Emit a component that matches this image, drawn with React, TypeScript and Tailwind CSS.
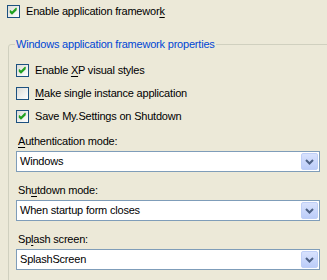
import type { ReactNode } from 'react'

function CheckBox({ checked }: { checked: boolean }) {
  return (
    <span className="w-[13px] h-[13px] shrink-0 border border-[#1C5180] bg-gradient-to-br from-[#DCDCD7] to-white flex items-center justify-center">
      {checked && (
        <svg width="11" height="11" viewBox="0 0 11 11" className="block">
          <path d="M2 5 L4 7 L8.5 2.5 M2 6 L4 8 L8.5 3.5 M2 4.5 L4 6.5 L8.5 2" stroke="#21A121" strokeWidth="1.2" fill="none" />
        </svg>
      )}
    </span>
  )
}

function CheckRow({ checked, children }: { checked: boolean; children: ReactNode }) {
  return (
    <div className="flex items-center gap-[6px] h-[13px]">
      <CheckBox checked={checked} />
      <span className="leading-[13px] whitespace-nowrap">{children}</span>
    </div>
  )
}

function Combo({ value }: { value: string }) {
  return (
    <div className="w-[304px] h-[21px] border border-[#7F9DB9] bg-white flex items-center">
      <span className="flex-1 pl-[3px] leading-[13px] whitespace-nowrap">{value}</span>
      <span className="w-[17px] h-[17px] mr-[1px] rounded-[2px] border border-[#BFCFF7] bg-gradient-to-b from-[#D8E2FD] to-[#BCCDF9] flex items-center justify-center">
        <svg width="9" height="6" viewBox="0 0 9 6" className="block">
          <path d="M1 1 L4.5 4.5 L8 1" stroke="#4D6185" strokeWidth="2" fill="none" />
        </svg>
      </span>
    </div>
  )
}

const U = ({ children }: { children: ReactNode }) => <span className="underline underline-offset-2">{children}</span>

export default function App() {
  return (
    <div className="w-[327px] h-[280px] overflow-hidden bg-[#ECE9D8] text-black text-[11px] tracking-[-0.2px] [font-family:'Liberation_Sans',Arial,sans-serif]">
      <div className="pl-[7px] pt-[5px]">
        <CheckRow checked>
          Enable application framewor<U>k</U>
        </CheckRow>
      </div>

      <fieldset className="ml-[8px] mt-[20px] w-[360px] h-[300px] border border-[#D0D0BF] rounded-[3px] pl-[7px] pt-[13px]">
        <legend className="ml-[-1px] px-[1px] leading-[13px] text-[#0046D5] whitespace-nowrap">
          Windows application framework properties
        </legend>
        <div className="flex flex-col gap-[10px]">
          <CheckRow checked>
            Enable <U>X</U>P visual styles
          </CheckRow>
          <CheckRow checked={false}>
            <U>M</U>ake single instance application
          </CheckRow>
          <CheckRow checked>Save My.Settings on Shutdown</CheckRow>
        </div>

        <div className="mt-[12px] flex flex-col">
          <span className="pl-[2px] leading-[13px]">
            <U>A</U>uthentication mode:
          </span>
          <div className="mt-[3px]">
            <Combo value="Windows" />
          </div>
          <span className="mt-[12px] pl-[2px] leading-[13px]">
            Sh<U>u</U>tdown mode:
          </span>
          <div className="mt-[3px]">
            <Combo value="When startup form closes" />
          </div>
          <span className="mt-[12px] pl-[2px] leading-[13px]">
            Sp<U>l</U>ash screen:
          </span>
          <div className="mt-[3px]">
            <Combo value="SplashScreen" />
          </div>
        </div>
      </fieldset>
    </div>
  )
}
